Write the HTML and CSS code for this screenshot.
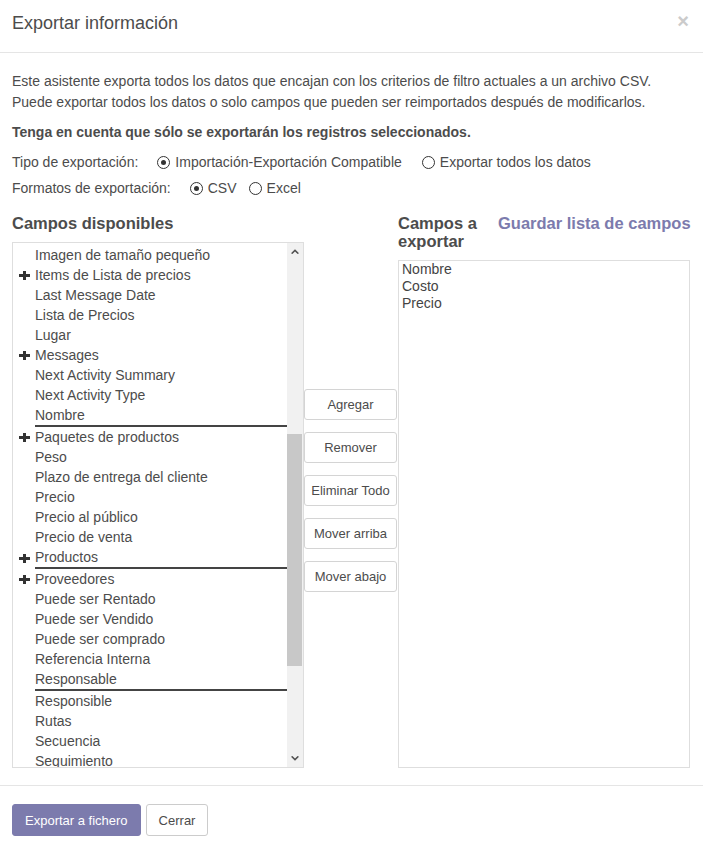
FILE: index.html
```html
<!DOCTYPE html>
<html lang="es">
<head>
<meta charset="utf-8">
<title>Exportar información</title>
<link rel="stylesheet" href="styles.css">
</head>
<body>
<div class="modal">
  <header class="modal-header">
    <h4 class="modal-title">Exportar información</h4>
    <span class="close">×</span>
  </header>
  <main class="modal-body">
    <p class="intro">Este asistente exporta todos los datos que encajan con los criterios de filtro actuales a un archivo CSV.<br>Puede exportar todos los datos o solo campos que pueden ser reimportados después de modificarlos.</p>
    <p class="note">Tenga en cuenta que sólo se exportarán los registros seleccionados.</p>
    <div class="opt-row">
      <span class="opt-label">Tipo de exportación:</span>
      <span class="opt opt-wide"><span class="radio checked"></span>Importación-Exportación Compatible</span>
      <span class="opt"><span class="radio"></span>Exportar todos los datos</span>
    </div>
    <div class="opt-row">
      <span class="opt-label">Formatos de exportación:</span>
      <span class="opt"><span class="radio checked"></span>CSV</span>
      <span class="opt"><span class="radio"></span>Excel</span>
    </div>

    <div class="columns">
      <section class="col col-left">
        <h3 class="col-title">Campos disponibles</h3>
        <div class="list-box">
          <div class="list">
            <div class="item"><span class="toggle"></span><span class="label">Imagen de tamaño pequeño</span></div>
            <div class="item"><span class="toggle"><svg class="plus" viewBox="0 0 11 9"><rect x="0" y="3" width="11" height="3"/><rect x="4" y="0" width="3" height="9"/></svg></span><span class="label">Items de Lista de precios</span></div>
            <div class="item"><span class="toggle"></span><span class="label">Last Message Date</span></div>
            <div class="item"><span class="toggle"></span><span class="label">Lista de Precios</span></div>
            <div class="item"><span class="toggle"></span><span class="label">Lugar</span></div>
            <div class="item"><span class="toggle"><svg class="plus" viewBox="0 0 11 9"><rect x="0" y="3" width="11" height="3"/><rect x="4" y="0" width="3" height="9"/></svg></span><span class="label">Messages</span></div>
            <div class="item"><span class="toggle"></span><span class="label">Next Activity Summary</span></div>
            <div class="item"><span class="toggle"></span><span class="label">Next Activity Type</span></div>
            <div class="item"><span class="toggle"></span><span class="label marked">Nombre</span></div>
            <div class="item"><span class="toggle"><svg class="plus" viewBox="0 0 11 9"><rect x="0" y="3" width="11" height="3"/><rect x="4" y="0" width="3" height="9"/></svg></span><span class="label">Paquetes de productos</span></div>
            <div class="item"><span class="toggle"></span><span class="label">Peso</span></div>
            <div class="item"><span class="toggle"></span><span class="label">Plazo de entrega del cliente</span></div>
            <div class="item"><span class="toggle"></span><span class="label">Precio</span></div>
            <div class="item"><span class="toggle"></span><span class="label">Precio al público</span></div>
            <div class="item"><span class="toggle"></span><span class="label">Precio de venta</span></div>
            <div class="item"><span class="toggle"><svg class="plus" viewBox="0 0 11 9"><rect x="0" y="3" width="11" height="3"/><rect x="4" y="0" width="3" height="9"/></svg></span><span class="label marked">Productos</span></div>
            <div class="item"><span class="toggle"><svg class="plus" viewBox="0 0 11 9"><rect x="0" y="3" width="11" height="3"/><rect x="4" y="0" width="3" height="9"/></svg></span><span class="label">Proveedores</span></div>
            <div class="item"><span class="toggle"></span><span class="label">Puede ser Rentado</span></div>
            <div class="item"><span class="toggle"></span><span class="label">Puede ser Vendido</span></div>
            <div class="item"><span class="toggle"></span><span class="label">Puede ser comprado</span></div>
            <div class="item"><span class="toggle"></span><span class="label">Referencia Interna</span></div>
            <div class="item"><span class="toggle"></span><span class="label marked">Responsable</span></div>
            <div class="item"><span class="toggle"></span><span class="label">Responsible</span></div>
            <div class="item"><span class="toggle"></span><span class="label">Rutas</span></div>
            <div class="item"><span class="toggle"></span><span class="label">Secuencia</span></div>
            <div class="item"><span class="toggle"></span><span class="label">Seguimiento</span></div>
          </div>
          <div class="scrollbar">
            <span class="sb-btn"><svg viewBox="0 0 8 5"><path d="M0 4.2 L4 0.2 L8 4.2 L6.6 5 L4 2.4 L1.4 5 Z"/></svg></span>
            <span class="sb-track"><span class="sb-thumb"></span></span>
            <span class="sb-btn"><svg viewBox="0 0 8 5"><path d="M0 0.8 L4 4.8 L8 0.8 L6.6 0 L4 2.6 L1.4 0 Z"/></svg></span>
          </div>
        </div>
      </section>

      <section class="col-actions">
        <button class="btn-action">Agregar</button>
        <button class="btn-action">Remover</button>
        <button class="btn-action">Eliminar Todo</button>
        <button class="btn-action">Mover arriba</button>
        <button class="btn-action">Mover abajo</button>
      </section>

      <section class="col col-right">
        <div class="right-head">
          <h3 class="col-title right-title">Campos a exportar</h3>
          <a class="save-link">Guardar lista de campos</a>
        </div>
        <div class="export-box">
          <div class="export-item">Nombre</div>
          <div class="export-item">Costo</div>
          <div class="export-item">Precio</div>
        </div>
      </section>
    </div>
  </main>
  <footer class="modal-footer">
    <button class="btn btn-primary">Exportar a fichero</button>
    <button class="btn btn-default">Cerrar</button>
  </footer>
</div>
</body>
</html>
```

FILE: styles.css
```css
* { box-sizing: border-box; }

body {
  margin: 0;
  background: #fff;
  font-family: "Liberation Sans", Arial, sans-serif;
  font-size: 14px;
  color: #4c4c4c;
}

.modal {
  width: 703px;
}

.modal-header {
  height: 53px;
  padding: 12px 14px 0 12px;
  border-bottom: 1px solid #e5e5e5;
  display: flex;
  justify-content: space-between;
  align-items: flex-start;
}

.modal-title {
  margin: 0;
  font-size: 18px;
  line-height: 22px;
  font-weight: normal;
  color: #4c4c4c;
}

.close {
  font-size: 20px;
  line-height: 18px;
  font-weight: bold;
  color: #cbcbcb;
}

.modal-body {
  padding: 0 12px;
}

.intro {
  margin: 18px 0 0;
  line-height: 21px;
}

.note {
  margin: 9px 0 0;
  line-height: 21px;
  font-weight: bold;
}

.opt-row {
  display: flex;
  align-items: center;
  height: 26px;
}

.note + .opt-row { margin-top: 6px; }

.opt-label {
  margin-right: 19px;
}

.opt {
  display: flex;
  align-items: center;
  margin-right: 12px;
}

.opt-wide {
  margin-right: 20px;
}

.radio {
  width: 13px;
  height: 13px;
  border: 1px solid #333;
  border-radius: 50%;
  margin-right: 5px;
  display: flex;
  align-items: center;
  justify-content: center;
  background: #fff;
}

.radio.checked::after {
  content: "";
  width: 5px;
  height: 5px;
  border-radius: 50%;
  background: #333;
}

.columns {
  display: flex;
  margin-top: 13px;
}

.col {
  width: 292px;
  display: flex;
  flex-direction: column;
}

.col-title {
  margin: 0 0 10px;
  font-size: 16.5px;
  line-height: 18px;
  font-weight: bold;
  color: #4c4c4c;
}

.list-box {
  height: 526px;
  border: 1px solid #dedede;
  display: flex;
  overflow: hidden;
}

.list {
  flex: 1;
  padding-top: 2px;
  overflow: hidden;
}

.item {
  display: flex;
  font-size: 14px;
  line-height: 20px;
}

.toggle {
  width: 22px;
  flex: none;
  display: flex;
  align-items: center;
  padding-left: 6px;
}

.plus {
  width: 11px;
  height: 9px;
  fill: #333;
}

.label {
  flex: 1;
  white-space: nowrap;
}

.label.marked {
  border-bottom: 2px solid #444;
}

.scrollbar {
  width: 16px;
  flex: none;
  background: #f1f1f1;
  display: flex;
  flex-direction: column;
}

.sb-btn {
  height: 17px;
  flex: none;
  display: flex;
  align-items: center;
  justify-content: center;
}

.sb-btn svg {
  width: 8px;
  height: 5px;
  fill: #505050;
}

.sb-track {
  flex: 1;
  display: flex;
  flex-direction: column;
}

.sb-thumb {
  margin-top: 174px;
  height: 232px;
  background: #c8c8c8;
  margin-right: 1px;
}

.col-actions {
  width: 94px;
  display: flex;
  flex-direction: column;
  gap: 12px;
  padding-top: 175px;
}

.btn-action {
  width: 93px;
  height: 31px;
  padding: 0;
  font-family: inherit;
  font-size: 13px;
  color: #4c4c4c;
  background: #fff;
  border: 1px solid #d4d4d4;
  border-radius: 3px;
}

.right-head {
  display: flex;
  align-items: flex-start;
}

.right-title {
  width: 100px;
  flex: none;
}

.save-link {
  font-size: 16.5px;
  line-height: 18px;
  font-weight: bold;
  color: #7c7bad;
  white-space: nowrap;
}

.export-box {
  height: 508px;
  border: 1px solid #dedede;
  padding: 0 3px;
}

.export-item {
  font-size: 14px;
  line-height: 17px;
  color: #444;
}

.modal-footer {
  margin-top: 17px;
  border-top: 1px solid #e5e5e5;
  padding: 18px 12px;
  display: flex;
  gap: 5px;
}

.btn {
  height: 32px;
  padding: 0 12px;
  font-family: inherit;
  font-size: 13px;
  border-radius: 3px;
}

.btn-primary {
  background: #7c7bad;
  border: 1px solid #7c7bad;
  color: #fff;
}

.btn-default {
  background: #fff;
  border: 1px solid #cccccc;
  color: #4c4c4c;
}
```
